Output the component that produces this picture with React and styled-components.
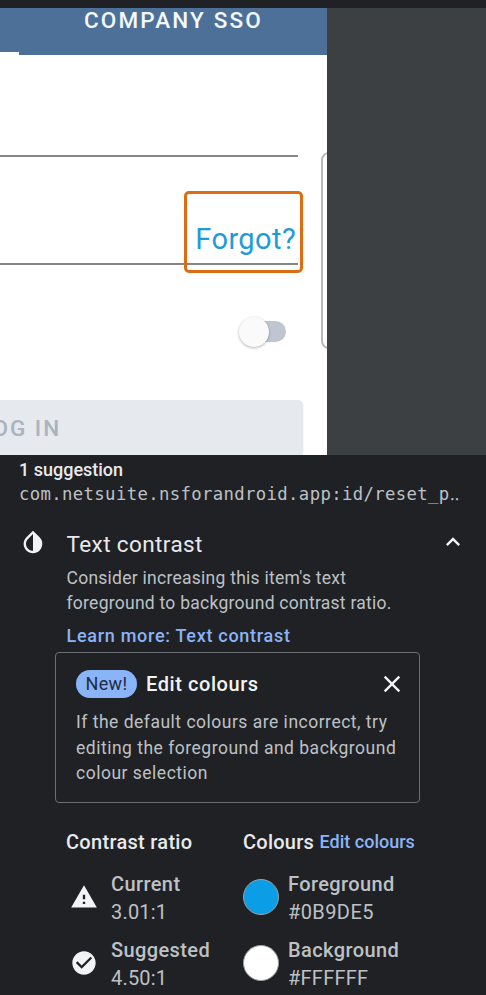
import React from "react";
import styled, { createGlobalStyle } from "styled-components";

const GlobalStyle = createGlobalStyle`
  * { box-sizing: border-box; }
  body { margin: 0; background: #202124; font-family: Roboto, "Noto Sans", sans-serif; }
`;

const Screen = styled.main`
  display: flex;
  flex-direction: column;
  width: 486px;
  height: 995px;
  overflow: hidden;
  background: #202124;
`;

const Preview = styled.section`
  display: flex;
  flex: none;
  height: 455px;
  padding-top: 8px;
  background: linear-gradient(#202124 8px, #3c4043 8px);
`;

const LoginPage = styled.div`
  position: relative;
  display: flex;
  flex-direction: column;
  width: 327px;
  overflow: hidden;
  background: #fff;
`;

const TabBar = styled.div`
  display: flex;
  flex-direction: column;
  justify-content: space-between;
  flex: none;
  height: 46.5px;
  background: #4d7099;
`;

const ActiveTabLine = styled.div`
  width: 19px;
  height: 3px;
  background: #fff;
`;

const Field = styled.div`
  display: flex;
  justify-content: flex-end;
  flex: none;
  width: 298px;
  height: ${(p) => p.$height}px;
  border-bottom: 2px solid #868686;
`;

const Label = styled.span`
  display: block;
  flex: none;
  white-space: nowrap;
  font-size: ${(p) => p.$size}px;
  font-weight: ${(p) => p.$weight || 400};
  line-height: ${(p) => p.$line}px;
  letter-spacing: ${(p) => p.$spacing || 0}px;
  color: ${(p) => p.$color || "#bdc1c6"};
`;

const TabLabel = styled(Label)`
  margin: -2px 0 0 84px;
`;

const ForgotLabel = styled(Label)`
  align-self: flex-end;
  margin: 0 2px 7px 0;
`;

const Highlight = styled.div`
  position: absolute;
  top: 183px;
  left: 184px;
  width: 119px;
  height: 82px;
  border: 3px solid #dc6d12;
  border-radius: 5px;
`;

const CardEdge = styled.div`
  position: absolute;
  top: 144px;
  left: 321px;
  width: 20px;
  height: 197px;
  border: 2px solid #b9b9b9;
  border-radius: 8px;
`;

const Switch = styled.div`
  display: flex;
  align-items: center;
  flex: none;
  width: 43px;
  height: 21px;
  margin: 56px 0 0 243px;
  border-radius: 11px;
  background: #bfc6d2;
`;

const SwitchThumb = styled.div`
  flex: none;
  width: 30px;
  height: 30px;
  margin-left: -4px;
  border-radius: 50%;
  background: #fafafa;
  box-shadow: 0 1px 3px rgba(0, 0, 0, 0.3);
`;

const LoginButton = styled.div`
  display: flex;
  align-items: center;
  flex: none;
  width: 313px;
  height: 56px;
  margin: 58px 0 0 -10px;
  border-radius: 5px;
  background: #e6e9ee;
  box-shadow: 0 1px 2px rgba(0, 0, 0, 0.12);
`;

const LoginLabel = styled(Label)`
  margin-left: -11px;
`;

const Report = styled.section`
  display: flex;
  flex-direction: column;
  padding: 3px 19px 0 19px;
`;

const ResourceId = styled(Label)`
  font-family: "DejaVu Sans Mono", monospace;
`;

const CheckHeader = styled.header`
  display: flex;
  align-items: flex-start;
  height: 30px;
  margin-top: 21px;
`;

const CheckTitle = styled(Label)`
  flex: 1;
  margin: 1px 0 0 19.5px;
`;

const Glyph = styled.svg`
  display: block;
  flex: none;
  width: ${(p) => p.$size}px;
  height: ${(p) => p.$size}px;
  fill: #f1f3f4;
`;

const Description = styled.div`
  margin: 8px 0 0 47.5px;
`;

const Notice = styled.div`
  width: 365px;
  height: 151px;
  margin: -3px 0 0 36px;
  padding: 17px 13px 0 20px;
  border: 1px solid #6b6e72;
  border-radius: 4px;
`;

const NoticeHeader = styled.div`
  display: flex;
  align-items: center;
  height: 28px;
  margin-bottom: 12px;
`;

const Badge = styled.div`
  display: flex;
  align-items: center;
  justify-content: center;
  width: 61px;
  height: 28px;
  margin-right: 9px;
  border-radius: 14px;
  background: #8ab4f8;
`;

const NoticeTitle = styled(Label)`
  flex: 1;
`;

const Results = styled.div`
  display: grid;
  grid-template-columns: 177px 1fr;
  margin: 25px 0 0 47px;
`;

const ColumnTitle = styled.div`
  display: flex;
  align-items: center;
  gap: 5.5px;
  height: 28px;
`;

const Result = styled.div`
  display: flex;
  align-items: center;
  height: 56px;
  margin-top: ${(p) => p.$gap}px;
`;

const ResultIcon = styled.div`
  display: flex;
  justify-content: ${(p) => (p.$wide ? "flex-start" : "center")};
  width: ${(p) => (p.$wide ? 45 : 35)}px;
  margin-right: ${(p) => (p.$wide ? 0 : 10)}px;
  padding-bottom: 3px;
`;

const Swatch = styled.div`
  width: 36px;
  height: 36px;
  border: 1px solid #9aa0a6;
  border-radius: 50%;
  background: ${(p) => p.$color};
`;

function ContrastIcon() {
  return (
    <Glyph $size={28} viewBox="0 0 24 24">
      <path d="M17.66 7.93 12 2.27 6.34 7.93c-3.12 3.12-3.12 8.19 0 11.31C7.9 20.8 9.95 21.58 12 21.58s4.1-.78 5.66-2.34c3.12-3.12 3.12-8.19 0-11.31zM12 19.59c-1.6 0-3.11-.62-4.24-1.76C6.62 16.69 6 15.19 6 13.59s.62-3.11 1.76-4.24L12 5.1v14.49z" />
    </Glyph>
  );
}

function CollapseIcon() {
  return (
    <Glyph $size={28} viewBox="0 0 24 24">
      <path d="m12 8-6 6 1.41 1.41L12 10.83l4.59 4.58L18 14z" />
    </Glyph>
  );
}

function CloseIcon() {
  return (
    <Glyph $size={28} viewBox="0 0 24 24">
      <path d="M19 6.41 17.59 5 12 10.59 6.41 5 5 6.41 10.59 12 5 17.59 6.41 19 12 13.41 17.59 19 19 17.59 13.41 12z" />
    </Glyph>
  );
}

function WarningIcon() {
  return (
    <Glyph $size={28} viewBox="0 0 24 24">
      <path d="M1 21h22L12 2 1 21zm12-3h-2v-2h2v2zm0-4h-2v-4h2v4z" />
    </Glyph>
  );
}

function CheckIcon() {
  return (
    <Glyph $size={28} viewBox="0 0 24 24">
      <path d="M12 2C6.48 2 2 6.48 2 12s4.48 10 10 10 10-4.48 10-10S17.52 2 12 2zm-2 15-5-5 1.41-1.41L10 14.17l7.59-7.59L19 8l-9 9z" />
    </Glyph>
  );
}

function ResultItem({ icon, wide, gap, name, value, valueSpacing }) {
  return (
    <Result $gap={gap}>
      <ResultIcon $wide={wide}>{icon}</ResultIcon>
      <div>
        <Label $size={20} $weight={500} $line={28} $spacing={0.4}>{name}</Label>
        <Label $size={20} $line={28} $spacing={valueSpacing}>{value}</Label>
      </div>
    </Result>
  );
}

export default function App() {
  return (
    <Screen>
      <GlobalStyle />
      <Preview>
        <LoginPage>
          <TabBar>
            <TabLabel $size={22.5} $weight={500} $line={28} $spacing={2.15} $color="#f4f8fc">COMPANY SSO</TabLabel>
            <ActiveTabLine />
          </TabBar>
          <Field $height={102.5} />
          <Field $height={108}>
            <ForgotLabel $size={29} $line={34} $spacing={0.4} $color="#1f9bd8">Forgot?</ForgotLabel>
          </Field>
          <Switch><SwitchThumb /></Switch>
          <LoginButton>
            <LoginLabel $size={22.5} $weight={500} $line={28} $spacing={2} $color="#abb3c0">LOG IN</LoginLabel>
          </LoginButton>
          <CardEdge />
          <Highlight />
        </LoginPage>
      </Preview>

      <Report>
        <Label $size={18} $weight={500} $line={24} $color="#e8eaed">1 suggestion</Label>
        <ResourceId $size={17.3} $line={25} $spacing={0.36}>com.netsuite.nsforandroid.app:id/reset_p‥</ResourceId>

        <CheckHeader>
          <ContrastIcon />
          <CheckTitle $size={22.5} $line={30} $spacing={0.4} $color="#e8eaed">Text contrast</CheckTitle>
          <CollapseIcon />
        </CheckHeader>

        <Description>
          <Label $size={17.5} $line={25} $spacing={0.26}>Consider increasing this item's text</Label>
          <Label $size={17.5} $line={25} $spacing={0.26}>foreground to background contrast ratio.</Label>
          <Label $size={18} $weight={500} $line={39} $spacing={0.71} $color="#8ab4f8">Learn more: Text contrast</Label>
        </Description>

        <Notice>
          <NoticeHeader>
            <Badge><Label $size={18} $line={28} $spacing={0.4} $color="#202c42">New!</Label></Badge>
            <NoticeTitle $size={20} $weight={500} $line={28} $spacing={0.57} $color="#f1f3f4">Edit colours</NoticeTitle>
            <CloseIcon />
          </NoticeHeader>
          <Label $size={17.5} $line={25.7} $spacing={0.5}>If the default colours are incorrect, try</Label>
          <Label $size={17.5} $line={25.7} $spacing={0.5}>editing the foreground and background</Label>
          <Label $size={17.5} $line={25.7} $spacing={0.5}>colour selection</Label>
        </Notice>

        <Results>
          <div>
            <ColumnTitle>
              <Label $size={20} $weight={500} $line={28} $spacing={0.3} $color="#e8eaed">Contrast ratio</Label>
            </ColumnTitle>
            <ResultItem gap={14} icon={<WarningIcon />} name="Current" value="3.01:1" valueSpacing={0.2} />
            <ResultItem gap={10} icon={<CheckIcon />} name="Suggested" value="4.50:1" valueSpacing={0.2} />
          </div>
          <div>
            <ColumnTitle>
              <Label $size={20} $weight={500} $line={28} $spacing={0.25} $color="#e8eaed">Colours</Label>
              <Label $size={18} $weight={500} $line={28} $color="#8ab4f8">Edit colours</Label>
            </ColumnTitle>
            <ResultItem wide gap={14} icon={<Swatch $color="#0b9de5" />} name="Foreground" value="#0B9DE5" valueSpacing={0.4} />
            <ResultItem wide gap={10} icon={<Swatch $color="#ffffff" />} name="Background" value="#FFFFFF" valueSpacing={0.25} />
          </div>
        </Results>
      </Report>
    </Screen>
  );
}
